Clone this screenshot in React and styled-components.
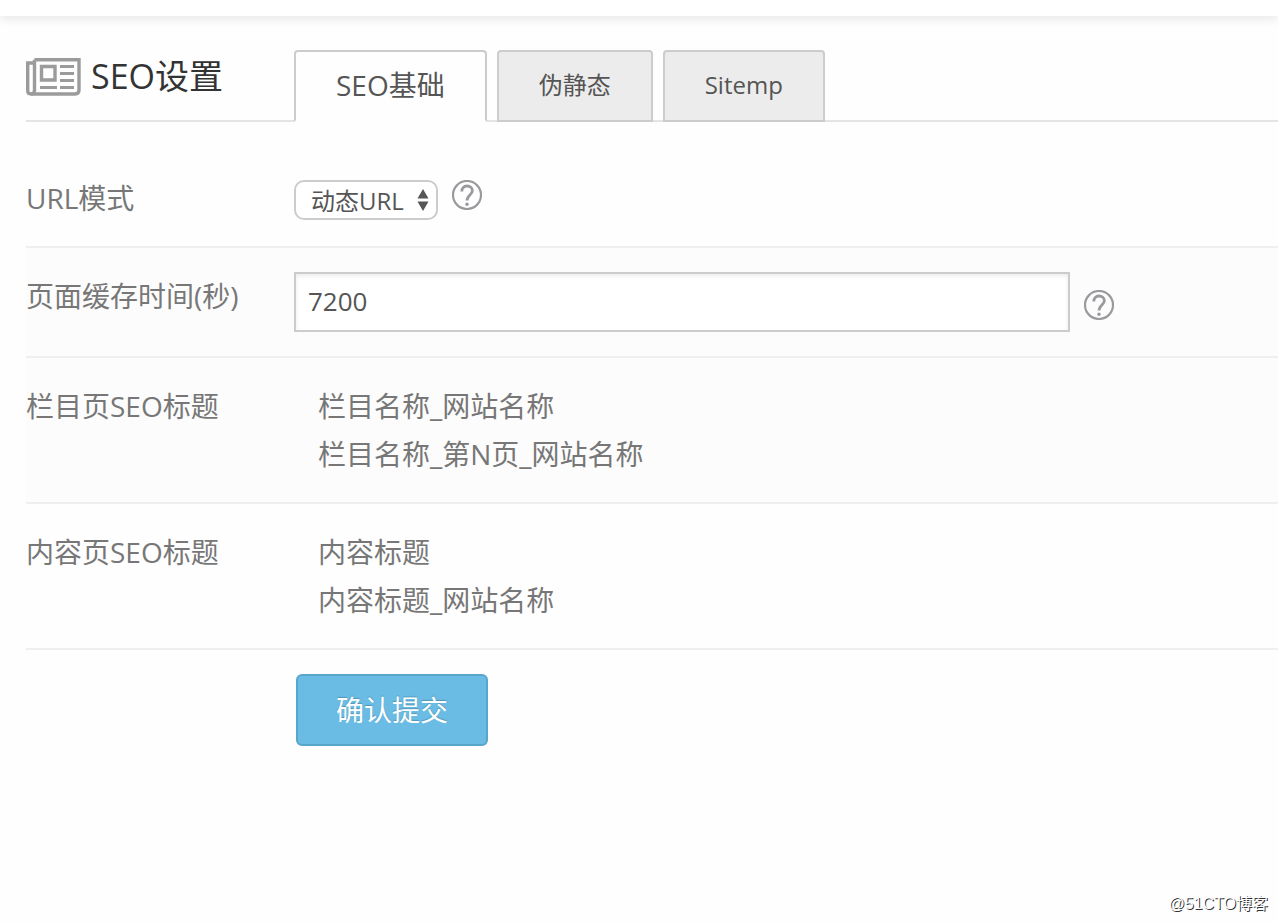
import React, { useState } from 'react';
import styled, { createGlobalStyle, css } from 'styled-components';

const tabs = [
  { id: 'basic', title: 'SEO基础' },
  { id: 'rewrite', title: '伪静态' },
  { id: 'sitemap', title: 'Sitemp' },
];

const titleRules = [
  {
    id: 'category',
    label: '栏目页SEO标题',
    shaded: true,
    lines: ['栏目名称_网站名称', '栏目名称_第N页_网站名称'],
  },
  {
    id: 'content',
    label: '内容页SEO标题',
    shaded: false,
    lines: ['内容标题', '内容标题_网站名称'],
  },
];

const App = () => {
  const [activeTab, setActiveTab] = useState('basic');
  const [cacheTime, setCacheTime] = useState('7200');

  return (
    <>
      <GlobalStyle />
      <Page>
        <TopStrip />
        <Main>
          <Header>
            <TitleBox>
              <NewspaperIcon />
              <Title>SEO设置</Title>
            </TitleBox>
            <TabList>
              {tabs.map(({ id, title }) => (
                <Tab
                  key={id}
                  href={`#${id}`}
                  $active={id === activeTab}
                  onClick={() => setActiveTab(id)}
                >
                  {title}
                </Tab>
              ))}
            </TabList>
          </Header>
          <Form onSubmit={e => e.preventDefault()}>
            <Row>
              <Label htmlFor="url-mode">URL模式</Label>
              <Field $align="flex-start" $paddingTop={6}>
                <SelectWrapper>
                  <Select id="url-mode" defaultValue="dynamic">
                    <option value="dynamic">动态URL</option>
                  </Select>
                  <SelectArrows />
                </SelectWrapper>
                <HelpButton />
              </Field>
            </Row>
            <Row $shaded>
              <Label htmlFor="cache-time">页面缓存时间(秒)</Label>
              <Field $align="center">
                <Input
                  id="cache-time"
                  type="text"
                  value={cacheTime}
                  onChange={e => setCacheTime(e.target.value)}
                />
                <HelpButton paddingTop={6} />
              </Field>
            </Row>
            {titleRules.map(({ id, label, shaded, lines }) => (
              <Row key={id} $shaded={shaded}>
                <RowTitle>{label}</RowTitle>
                <RuleList>
                  {lines.map(line => (
                    <li key={line}>{line}</li>
                  ))}
                </RuleList>
              </Row>
            ))}
            <SubmitRow>
              <SubmitButton type="submit">确认提交</SubmitButton>
            </SubmitRow>
          </Form>
        </Main>
        <Watermark>@51CTO博客</Watermark>
      </Page>
    </>
  );
};

const NewspaperIcon = () => {
  return (
    <svg width="55" height="40" viewBox="0 0 55 40" fill="none" aria-hidden="true">
      <g stroke="#9b9b9b" strokeWidth="3.4">
        <path d="M8.5 3.7H53V34Q53 38 49 38H5Q1.7 38 1.7 34.5V7H8.5" />
        <path d="M8.5 3.7V34.5Q8.5 38 5 38" />
        <path d="M15.5 10.5H29V24H15.5Z" />
        <path d="M34 10.5H48M34 17.5H48M34 24.5H48M34 31.5H48M14 31.5H31" strokeWidth="3" />
      </g>
    </svg>
  );
};

const SelectArrows = () => {
  return (
    <ArrowSvg width="12" height="22" viewBox="0 0 12 22" aria-hidden="true">
      <path d="M6 0L11.5 9.5H0.5Z M6 22L11.5 12.5H0.5Z" fill="#555" />
    </ArrowSvg>
  );
};

const HelpButton = ({ paddingTop = 0 }) => {
  return (
    <StyledHelpButton type="button" aria-label="帮助" $paddingTop={paddingTop}>
      <svg width="30" height="30" viewBox="0 0 30 30" fill="none">
        <circle cx="15" cy="15" r="14" stroke="#9a999e" strokeWidth="2.2" />
        <path
          d="M9.8 11.4C9.8 8 12 6 15 6C18 6 20.4 7.9 20.4 10.8C20.4 14.6 15 15 15 20.6"
          stroke="#9a999e"
          strokeWidth="2.8"
        />
        <circle cx="15" cy="24.2" r="1.7" fill="#9a999e" />
      </svg>
    </StyledHelpButton>
  );
};

const GlobalStyle = createGlobalStyle`
  * {
    box-sizing: border-box;
  }

  body {
    margin: 0;
    background-color: #fefefe;
    color: #777;
    font-family: 'Open Sans', 'Noto Sans CJK SC', sans-serif;
    font-size: 28px;
    line-height: 48px;
  }

  button,
  input,
  select {
    font-family: inherit;
  }
`;

const Page = styled.div`
  display: flex;
  flex-direction: column;
  min-height: 100vh;
`;

const TopStrip = styled.div`
  height: 16px;
  background-color: #fff;
  box-shadow: 0 4px 8px rgba(0, 0, 0, 0.08);
`;

const Main = styled.main`
  padding: 34px 0 0 26px;
`;

const Header = styled.header`
  display: flex;
  height: 72px;
  border-bottom: 2px solid #e4e4e4;
`;

const TitleBox = styled.div`
  display: flex;
  flex: 0 0 268px;
  gap: 10px;
  align-items: center;
  height: 52px;
`;

const Title = styled.h1`
  margin: 0;
  color: #333;
  font-size: 34px;
  font-weight: 400;
  line-height: 52px;
`;

const TabList = styled.nav`
  display: flex;
  gap: 10px;
  height: 72px;
`;

const Tab = styled.a`
  height: 72px;
  padding: 0 40px;
  border: 2px solid #ccc;
  border-radius: 4px 4px 0 0;
  background-color: #ececec;
  color: #555;
  font-size: 24px;
  line-height: 66px;
  text-decoration: none;
  white-space: nowrap;

  ${({ $active }) =>
    $active &&
    css`
      border-bottom-color: #fefefe;
      background-color: #fefefe;
      font-size: 28px;
    `}
`;

const Form = styled.form`
  padding-top: 28px;
`;

const Row = styled.div`
  display: flex;
  padding: 24px 0;
  border-bottom: 2px solid #efefef;
  background-color: ${({ $shaded }) => ($shaded ? '#fcfcfc' : 'transparent')};
`;

const labelStyle = css`
  flex: 0 0 268px;
  white-space: nowrap;
`;

const Label = styled.label`
  ${labelStyle}
`;

const RowTitle = styled.div`
  ${labelStyle}
`;

const Field = styled.div`
  display: flex;
  flex: 1;
  gap: 14px;
  align-items: ${({ $align }) => $align};
  min-width: 0;
  padding-top: ${({ $paddingTop = 0 }) => $paddingTop}px;
`;

const SelectWrapper = styled.div`
  position: relative;
  display: flex;
`;

const Select = styled.select`
  appearance: none;
  width: 144px;
  height: 40px;
  padding: 0 32px 0 15px;
  border: 2px solid #ccc;
  border-radius: 10px;
  background-color: #fff;
  color: #555;
  font-size: 24px;
`;

const ArrowSvg = styled.svg`
  position: absolute;
  top: 9px;
  right: 9px;
  pointer-events: none;
`;

const Input = styled.input`
  flex: 0 1 776px;
  min-width: 0;
  height: 60px;
  padding: 0 12px 2px;
  border: 2px solid #ccc;
  background-color: #fff;
  box-shadow: inset 0 2px 4px rgba(0, 0, 0, 0.08);
  color: #555;
  font-size: 26px;
`;

const StyledHelpButton = styled.button`
  display: flex;
  padding: ${({ $paddingTop }) => $paddingTop}px 0 0;
  border: 0;
  background: none;
  cursor: pointer;
`;

const RuleList = styled.ul`
  flex: 1;
  margin: 0;
  padding: 0 0 0 24px;
  list-style: none;
`;

const SubmitRow = styled.div`
  padding: 24px 0 24px 270px;
`;

const SubmitButton = styled.button`
  display: block;
  height: 72px;
  padding: 0 38px 2px;
  border: 2px solid #5aa5ca;
  border-radius: 6px;
  background-color: #6abce4;
  color: #fff;
  font-size: 28px;
  text-shadow: 0 -1px 1px rgba(0, 0, 0, 0.2);
  cursor: pointer;
`;

const Watermark = styled.footer`
  margin-top: auto;
  padding: 0 10px 6px;
  color: #fff;
  font-family: 'Liberation Sans', 'Noto Sans CJK SC', sans-serif;
  font-size: 16px;
  line-height: 24px;
  text-align: right;
  text-shadow: 1px 1px 0 #333;
`;

export default App;
